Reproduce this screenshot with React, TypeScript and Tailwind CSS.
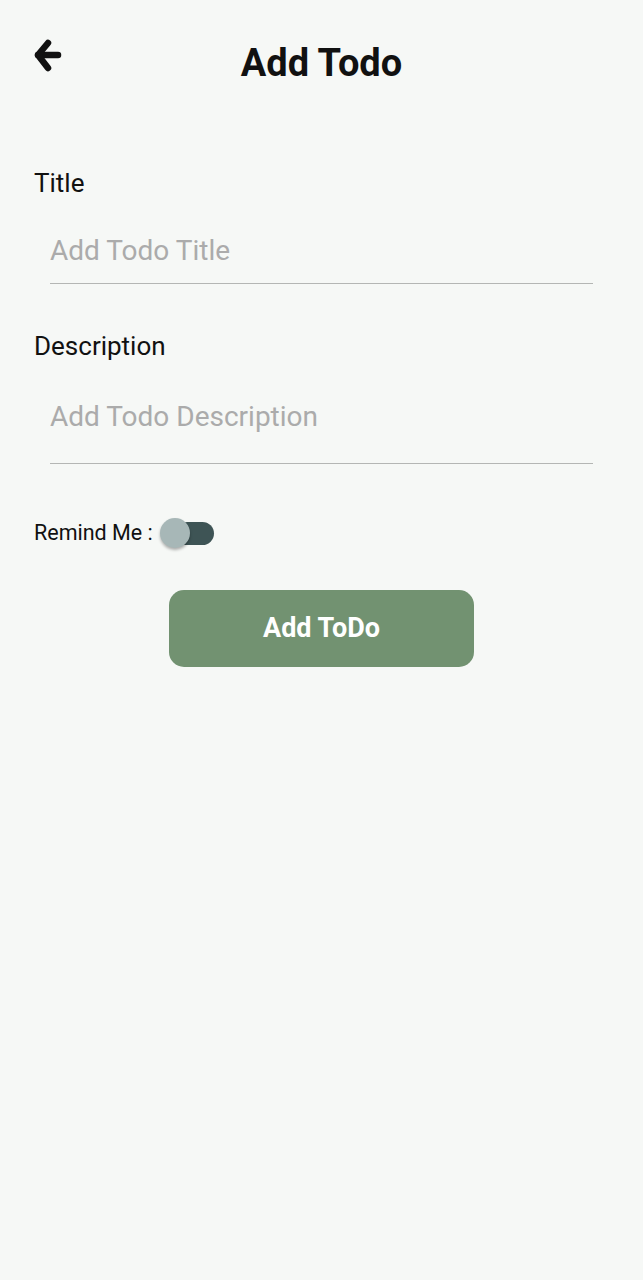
export default function App() {
  return (
    <div className="min-h-[1280px] w-full bg-[#f6f8f6] font-['Roboto',sans-serif] text-[#111]">
      <div className="relative flex h-[128px] items-start justify-center pt-[38px]">
        <button className="absolute left-[33px] top-[37px]">
          <svg width="32" height="36" viewBox="0 0 32 36" fill="none" stroke="#111" strokeWidth="6.5" strokeLinecap="round" strokeLinejoin="round">
            <path d="M5 18 H25" />
            <path d="M15 6 L5 18 L15 31" />
          </svg>
        </button>
        <h1 className="text-[38px] font-bold leading-[50px]">Add Todo</h1>
      </div>

      <div className="px-[34px] pt-[39px]">
        <label className="block text-[26px] leading-[32px]">Title</label>
        <div className="ml-[16px] mr-[16px] mt-[35px] border-b-[1.5px] border-[#b4b6b4] pb-[15px]">
          <input
            placeholder="Add Todo Title"
            className="w-full bg-transparent text-[28px] leading-[34px] outline-none placeholder:text-[#ababab]"
          />
        </div>

        <label className="mt-[46px] block text-[26px] leading-[32px]">Description</label>
        <div className="ml-[16px] mr-[16px] mt-[38px] border-b-[1.5px] border-[#b4b6b4] pb-[29px]">
          <input
            placeholder="Add Todo Description"
            className="w-full bg-transparent text-[28px] leading-[34px] outline-none placeholder:text-[#ababab]"
          />
        </div>

        <div className="mt-[53px] flex items-center">
          <span className="text-[21.5px] leading-[28px]">Remind Me :</span>
          <div className="relative ml-[7px] h-[32px] w-[56px]">
            <div className="absolute left-[16px] top-[5px] h-[23px] w-[38px] rounded-full bg-[#3e5455]" />
            <div className="absolute left-0 top-[1px] h-[30px] w-[30px] rounded-full bg-[#a7b7b7] shadow-[0_2px_3px_rgba(0,0,0,0.3)]" />
          </div>
        </div>

        <div className="mt-[41px] flex justify-center">
          <button className="h-[77px] w-[305px] rounded-[15px] bg-[#729271] text-[27px] font-bold text-white">
            Add ToDo
          </button>
        </div>
      </div>
    </div>
  );
}
